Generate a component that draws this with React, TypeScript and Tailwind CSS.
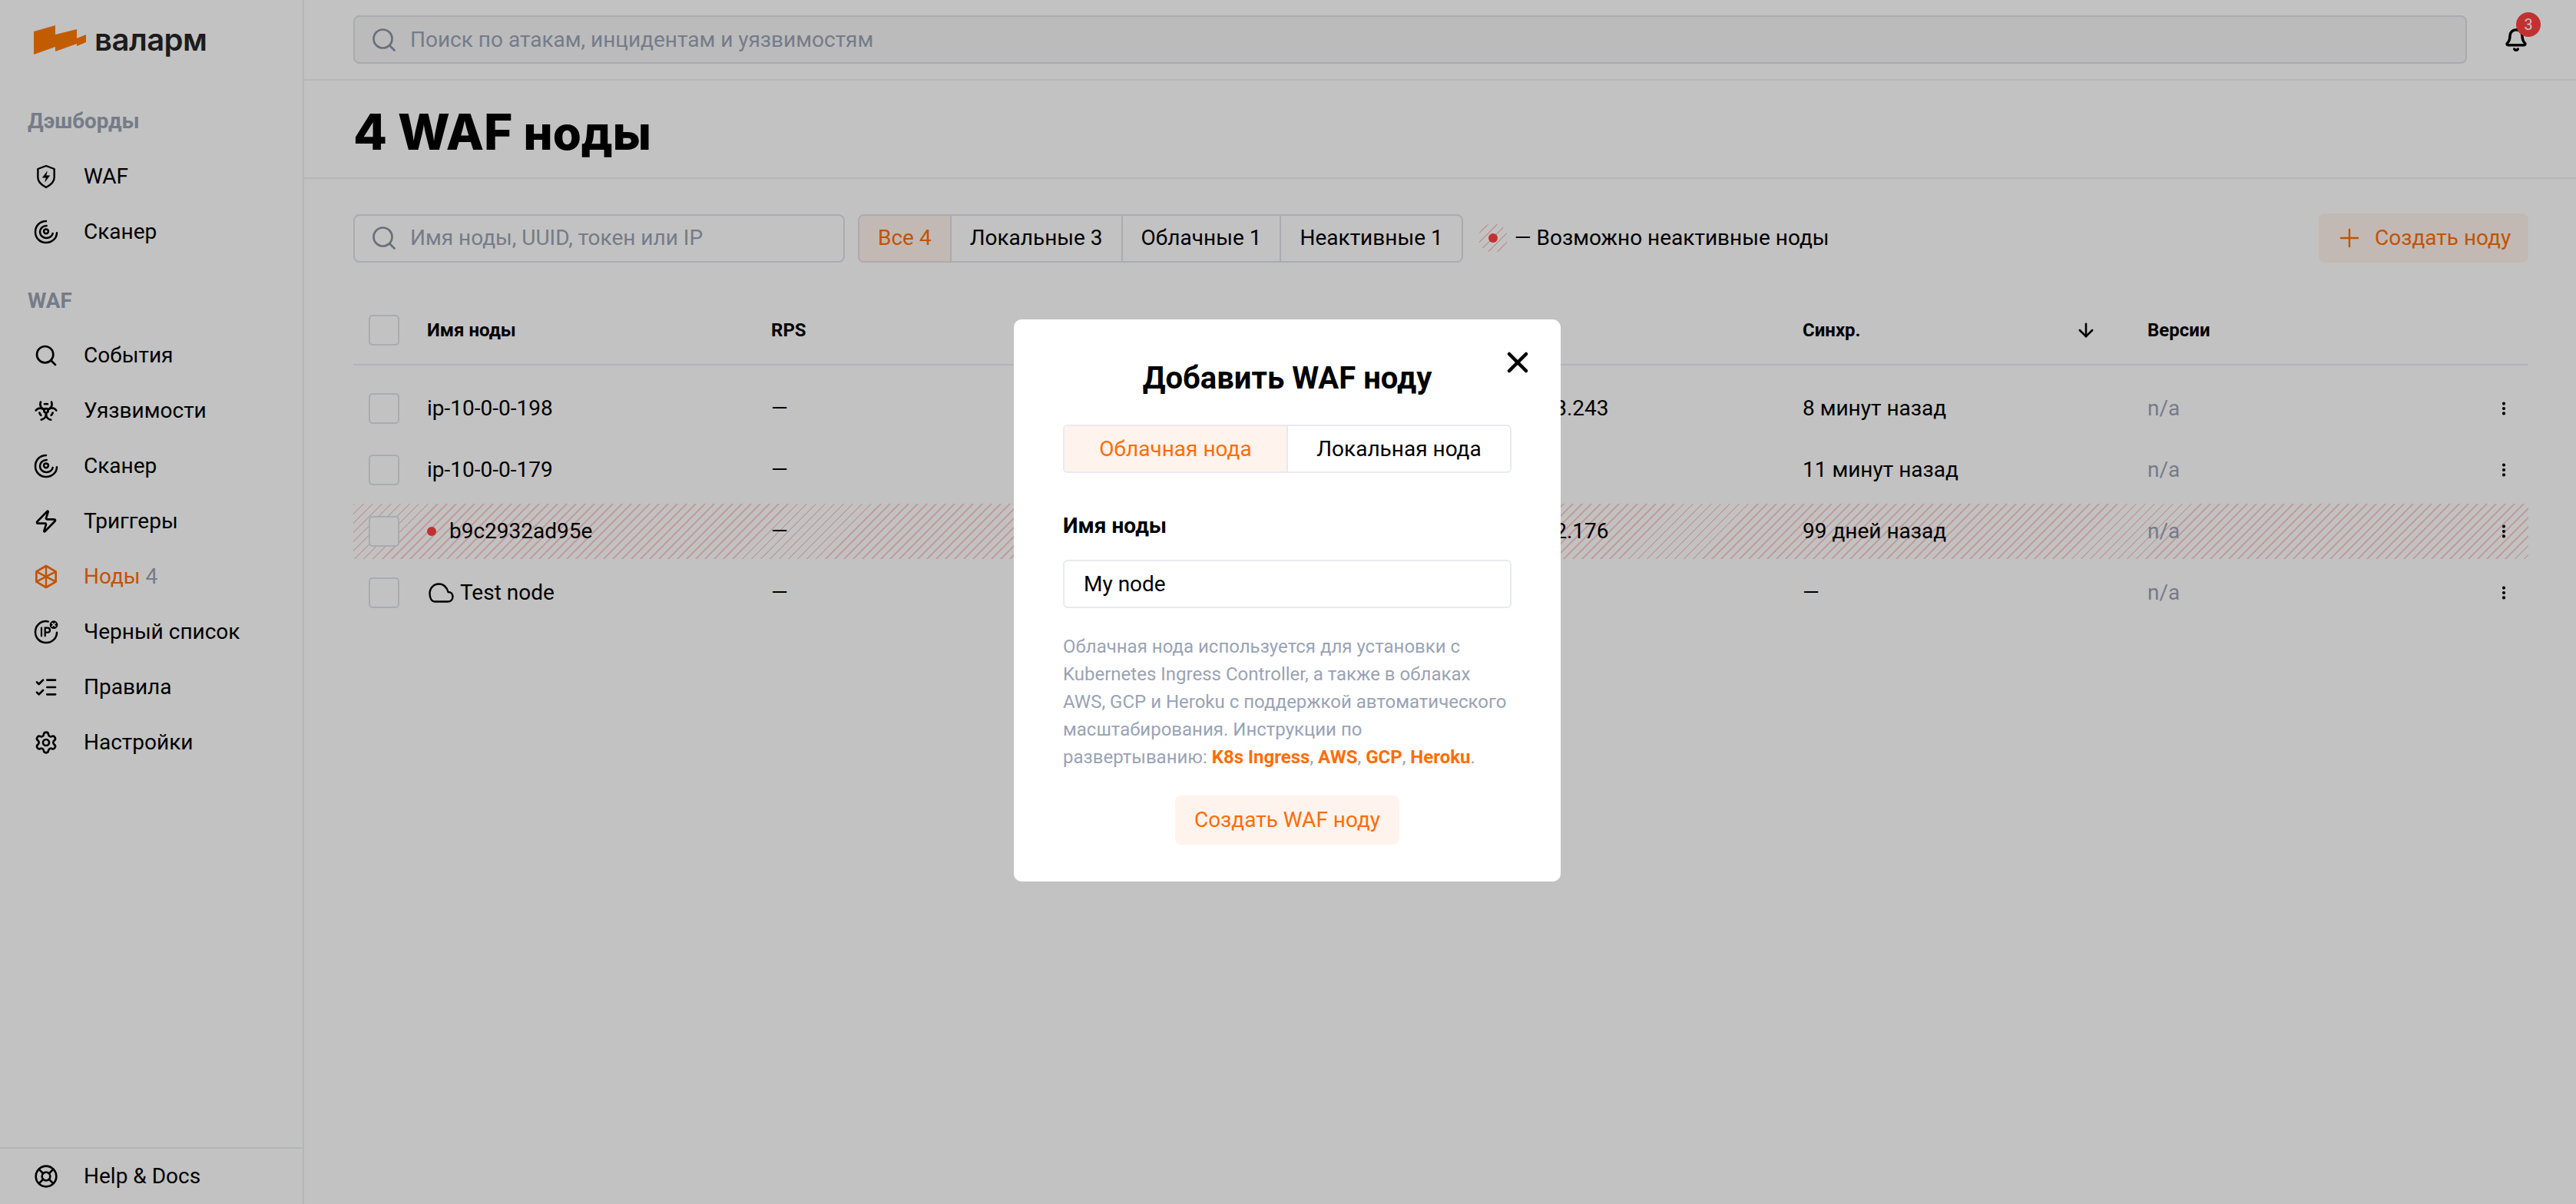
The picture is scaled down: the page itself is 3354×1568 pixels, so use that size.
import { ArrowDown, Bell, Biohazard, EllipsisVertical, LifeBuoy, ListChecks, Plus, Search, Settings, X, Zap } from "lucide-react"
import type { ReactNode } from "react"

const Shield = () => (
  <svg width="34" height="34" viewBox="0 0 24 24" fill="none" stroke="currentColor" strokeWidth="1.8" strokeLinejoin="round">
    <path d="M12 1.5 L20 4.5 V13 C20 17.5 16 20.5 12 22.5 C8 20.5 4 17.5 4 13 V4.5 Z" />
    <path d="M13 7 L8.500 13 H12 L11 17 L15.500 11 H12 Z" fill="currentColor" strokeWidth="0.4" />
  </svg>
)

const Scanner = () => (
  <svg width="34" height="34" viewBox="0 0 24 24" fill="none" stroke="currentColor" strokeWidth="1.9" strokeLinecap="round">
    <path d="M12 1.500 C6 1.500 1.500 6 1.500 12 C1.500 18 6 22.500 12 22.500 C18 22.500 22.500 18 22.500 13" />
    <path d="M12.500 6 C8.500 6 6 9 6 12 C6 15.500 9 18 12.500 18 C15.500 18 18 16 18.500 13.500" />
    <circle cx="12" cy="11.500" r="2.200" />
  </svg>
)

const NodeHex = () => (
  <svg width="34" height="34" viewBox="0 0 24 24" fill="none" stroke="currentColor" strokeWidth="2" strokeLinejoin="round">
    <path d="M12 1.500 L21.500 7 V17 L12 22.500 L2.500 17 V7 Z" />
    <path d="M12 1.500 V22.500 M2.500 7 L21.500 17 M21.500 7 L2.500 17" strokeWidth="1.800" />
  </svg>
)

const BlackList = () => (
  <svg width="34" height="34" viewBox="0 0 24 24" fill="none" stroke="currentColor" strokeWidth="1.900" strokeLinecap="round">
    <path d="M14 1.800 C13 1.600 12.500 1.500 12 1.500 C6 1.500 1.500 6.200 1.500 12 C1.500 18 6 22.500 12 22.500 C18 22.500 22.500 18 22.500 12.500" />
    <path d="M7.500 8 V16 M11 16 V8 H13.500 C16.500 8 16.500 12.500 13.500 12.500 H11" strokeWidth="1.700" />
    <circle cx="19.500" cy="5" r="4" fill="currentColor" stroke="none" />
    <path d="M18 3.500 L21 6.500 M21 3.500 L18 6.500" stroke="#fff" strokeWidth="1.200" />
  </svg>
)

const CloudIcon = () => (
  <svg width="33" height="26" viewBox="0 0 33 26" fill="none" stroke="currentColor" strokeWidth="2.400" strokeLinejoin="round" className="shrink-0">
    <path d="M8 24.500 H25 C29 24.500 31.500 21.500 31.500 18 C31.500 14.500 29 12 25.500 12 C24 6 19.500 1.500 13.500 1.500 C6.500 1.500 1.500 7 1.500 14 C1.500 20 4 24.500 8 24.500 Z" />
  </svg>
)

const iconProps = { size: 36, strokeWidth: 2 }

function NavItem({ icon, label, count, active }: { icon: ReactNode; label: string; count?: string; active?: boolean }) {
  return (
    <div className={`flex h-[72px] items-center gap-[33px] pl-[44px] text-[28px] ${active ? "text-[#ff6d00]" : "text-black"}`}>
      <div className="flex w-[32px] shrink-0 items-center justify-center">{icon}</div>
      <span>
        {label}
        {count && <span className="text-[#9aa3b5]"> {count}</span>}
      </span>
    </div>
  )
}

function Sidebar() {
  return (
    <aside className="flex h-full w-[396px] shrink-0 flex-col border-r-2 border-[#eceef2]">
      <div className="flex h-[105px] shrink-0 items-center gap-[11px] pb-[2px] pl-[44px]">
        <svg width="68" height="40" viewBox="0 0 68 40" fill="#ff7a00">
          <path d="M0 9 L28 1 V29 L0 39 Z" />
          <path d="M28 13 L56 6 V25 L28 35 Z" />
          <path d="M56 18 L68 13 V23 L56 28 Z" />
        </svg>
        <span className="font-['Inter',sans-serif] text-[40px] font-semibold leading-none tracking-[-0.5px] text-[#262626]">валарм</span>
      </div>
      <div className="pl-[36px] pt-[34px] text-[27.8px] font-bold leading-[38px] text-[#9aa3b5]">Дэшборды</div>
      <div className="mt-[17px]">
        <NavItem icon={<Shield />} label="WAF" />
        <NavItem icon={<Scanner />} label="Сканер" />
      </div>
      <div className="pl-[36px] pt-[35px] text-[27.8px] font-bold leading-[38px] text-[#9aa3b5]">WAF</div>
      <div className="mt-[16px]">
        <NavItem icon={<Search {...iconProps} />} label="События" />
        <NavItem icon={<Biohazard {...iconProps} />} label="Уязвимости" />
        <NavItem icon={<Scanner />} label="Сканер" />
        <NavItem icon={<Zap {...iconProps} />} label="Триггеры" />
        <NavItem icon={<NodeHex />} label="Ноды" count="4" active />
        <NavItem icon={<BlackList />} label="Черный список" />
        <NavItem icon={<ListChecks {...iconProps} />} label="Правила" />
        <NavItem icon={<Settings {...iconProps} />} label="Настройки" />
      </div>
      <div className="mt-auto border-t-2 border-[#eceef2]">
        <NavItem icon={<LifeBuoy {...iconProps} />} label="Help & Docs" />
      </div>
    </aside>
  )
}

const cols = "grid grid-cols-[96px_448px_911px_432px_449px_1fr] items-center"

const rows = [
  { name: "ip-10-0-0-198", ip: "18.197.73.243", sync: "8 минут назад" },
  { name: "ip-10-0-0-179", ip: "—", sync: "11 минут назад" },
  { name: "b9c2932ad95e", ip: "52.29.142.176", sync: "99 дней назад", warn: true },
  { name: "Test node", ip: "—", sync: "—", cloud: true },
]

const Check = () => <div className="h-[40px] w-[40px] rounded-[5px] border-2 border-[#dfe1e6] bg-white" />

const hatch = "bg-[repeating-linear-gradient(135deg,#ffcfcf_0px,#ffcfcf_2px,transparent_2px,transparent_8.5px)]"

function Table() {
  return (
    <div className="mt-[68px]">
      <div className={`${cols} border-b-2 border-[#eceef2] pb-[24px] text-[24px] font-bold`}>
        <div className="pl-[20px]">
          <Check />
        </div>
        <div>Имя ноды</div>
        <div>RPS</div>
        <div>IP</div>
        <div className="flex items-center justify-between pr-[66px]">
          <span>Синхр.</span>
          <ArrowDown size={28} strokeWidth={2.2} />
        </div>
        <div>Версии</div>
      </div>
      <div className="flex flex-col gap-[8px] pt-[20px]">
        {rows.map((row) => (
          <div key={row.name} className={`${cols} h-[72px] text-[28px] ${row.warn ? hatch : ""}`}>
            <div className="pl-[20px]">
              <Check />
            </div>
            <div className="flex items-center">
              {row.warn && <span className="mr-[17px] h-[12px] w-[12px] rounded-full bg-[#ff4141]" />}
              {row.cloud && (
                <span className="mr-[8px] ml-[2px] flex">
                  <CloudIcon />
                </span>
              )}
              {row.name}
            </div>
            <div>—</div>
            <div>{row.ip}</div>
            <div>{row.sync}</div>
            <div className="flex items-center justify-between pr-[21px]">
              <span className="text-[#9aa3b5]">n/a</span>
              <EllipsisVertical size={22} strokeWidth={2.6} />
            </div>
          </div>
        ))}
      </div>
    </div>
  )
}

function Main() {
  return (
    <main className="flex min-w-0 flex-1 flex-col">
      <div className="flex h-[105px] shrink-0 items-center border-b-2 border-[#eceef2] pl-[64px] pr-[62px]">
        <div className="flex h-[63px] w-[2752px] items-center gap-[16px] rounded-[8px] border-2 border-[#dfe1e6] bg-[#f6f6f8] pl-[20px] text-[28px] text-[#9aa3b5]">
          <Search size={36} strokeWidth={1.8} className="text-[#8b92a3]" />
          <span>Поиск по атакам, инцидентам и уязвимостям</span>
        </div>
        <div className="relative ml-auto">
          <Bell size={32} strokeWidth={2.6} />
          <div className="absolute right-[-16px] top-[-20px] flex h-[32px] w-[32px] items-center justify-center rounded-full bg-[#ff4141] text-[20px] text-white">3</div>
        </div>
      </div>
      <div className="flex h-[128px] shrink-0 items-center border-b-2 border-[#eceef2] pl-[64px] font-['Inter',sans-serif]">
        <h1 className="pt-[8px] text-[64px] font-extrabold leading-none">
          4 WAF <span className="text-[60px]">ноды</span>
        </h1>
      </div>
      <div className="flex-1 pl-[64px] pr-[62px] pt-[45px]">
        <div className="flex h-[64px] items-center">
          <div className="flex h-[63px] w-[640px] items-center gap-[16px] rounded-[8px] border-2 border-[#dfe1e6] pl-[20px] text-[28px] text-[#9aa3b5]">
            <Search size={36} strokeWidth={1.8} className="text-[#8b92a3]" />
            <span>Имя ноды, UUID, токен или IP</span>
          </div>
          <div className="ml-[17px] flex h-[63px] overflow-hidden rounded-[8px] border-2 border-[#dfe1e6] text-[28px]">
            <div className="flex items-center bg-[#fff3ed] px-[24px] text-[#ff6d00]">Все 4</div>
            <div className="flex items-center border-l-2 border-[#dfe1e6] px-[24px]">Локальные 3</div>
            <div className="flex items-center border-l-2 border-[#dfe1e6] px-[24px]">Облачные 1</div>
            <div className="flex items-center border-l-2 border-[#dfe1e6] px-[24px]">Неактивные 1</div>
          </div>
          <div className="relative ml-[20px] flex h-[38px] w-[38px] items-center justify-center">
            <div className="absolute inset-0 rounded-full bg-[repeating-linear-gradient(135deg,#ffc4c4_0px,#ffc4c4_2px,transparent_2px,transparent_8.5px)]" />
            <span className="relative h-[12px] w-[12px] rounded-full bg-[#ff4141]" />
          </div>
          <span className="ml-[9px] text-[28px]">— Возможно неактивные ноды</span>
          <div className="ml-auto flex h-[64px] w-[273px] items-center gap-[14px] rounded-[8px] bg-[#fff3ed] pl-[21px] text-[28px] text-[#ff6d00]">
            <Plus size={38} strokeWidth={1.5} />
            <span>Создать ноду</span>
          </div>
        </div>
        <Table />
      </div>
    </main>
  )
}

function Modal() {
  return (
    <div className="fixed inset-0 flex items-center justify-center bg-[rgba(0,0,0,0.24)]">
      <div className="relative mb-[4px] mr-[2px] flex h-[732px] w-[712px] flex-col rounded-[10px] bg-white px-[64px]">
        <X size={44} strokeWidth={2.5} className="absolute right-[34px] top-[34px]" />
        <h2 className="mt-[52px] text-center text-[40px] font-bold leading-[50px]">Добавить WAF ноду</h2>
        <div className="mt-[35px] flex h-[63px] overflow-hidden rounded-[6px] border-2 border-[#e8eaee] text-[28px]">
          <div className="flex flex-1 items-center justify-center bg-[#fff3ed] text-[#ff6d00]">Облачная нода</div>
          <div className="flex flex-1 items-center justify-center border-l-2 border-[#e8eaee]">Локальная нода</div>
        </div>
        <label className="mt-[50px] text-[28px] font-bold leading-[38px]">Имя ноды</label>
        <div className="mt-[25px] flex h-[63px] items-center rounded-[6px] border-2 border-[#e8eaee] pl-[25px] text-[28px]">My node</div>
        <p className="mt-[32px] text-[24px] leading-[36px] text-[#9aa3b5]">
          Облачная нода используется для установки с Kubernetes Ingress Controller, а также в облаках AWS, GCP и Heroku с поддержкой автоматического масштабирования. Инструкции по
          <br />
          развертыванию: <span className="font-bold text-[#ff6d00]">K8s Ingress</span>, <span className="font-bold text-[#ff6d00]">AWS</span>, <span className="font-bold text-[#ff6d00]">GCP</span>,{" "}
          <span className="font-bold text-[#ff6d00]">Heroku</span>.
        </p>
        <div className="mt-[32px] flex justify-center">
          <div className="flex h-[64px] w-[292px] items-center justify-center rounded-[8px] bg-[#fff3ed] text-[28px] text-[#ff6d00]">Создать WAF ноду</div>
        </div>
      </div>
    </div>
  )
}

export default function App() {
  return (
    <div className="flex h-[1568px] w-[3354px] overflow-hidden bg-white font-['Roboto',sans-serif] text-black">
      <Sidebar />
      <Main />
      <Modal />
    </div>
  )
}
